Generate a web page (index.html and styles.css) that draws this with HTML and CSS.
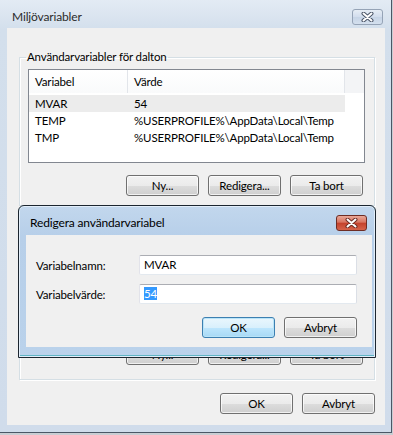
FILE: index.html
```html
<!DOCTYPE html>
<html lang="sv">
<head>
    <meta charset="UTF-8">
    <title>Miljövariabler</title>
    <link rel="stylesheet" href="styles.css">
</head>
<body>

    <div class="window">
        <div class="titlebar">
            <span class="title">Miljövariabler</span>
            <span class="close-btn">
                <svg width="13" height="10" viewBox="0 0 13 10">
                    <path d="M2.5 1.5 L10.5 8.5 M10.5 1.5 L2.5 8.5" stroke="#4a5568" stroke-width="4" stroke-linecap="round"/>
                    <path d="M2.5 1.5 L10.5 8.5 M10.5 1.5 L2.5 8.5" stroke="#fff" stroke-width="2" stroke-linecap="round"/>
                </svg>
            </span>
        </div>

        <div class="client">
            <fieldset class="group">
                <legend>Användarvariabler för dalton</legend>
                <div class="listview">
                    <div class="lv-header">
                        <span class="col-name">Variabel</span>
                        <span class="col-value">Värde</span>
                        <span class="col-fill"></span>
                    </div>
                    <div class="lv-row selected">
                        <span class="col-name">MVAR</span>
                        <span class="col-value">54</span>
                    </div>
                    <div class="lv-row">
                        <span class="col-name">TEMP</span>
                        <span class="col-value">%USERPROFILE%\AppData\Local\Temp</span>
                    </div>
                    <div class="lv-row">
                        <span class="col-name">TMP</span>
                        <span class="col-value">%USERPROFILE%\AppData\Local\Temp</span>
                    </div>
                </div>
                <div class="button-row">
                    <button class="btn">Ny...</button>
                    <button class="btn">Redigera...</button>
                    <button class="btn">Ta bort</button>
                </div>
            </fieldset>

            <!-- system variables group, mostly hidden by the edit dialog -->
            <fieldset class="group system-group">
                <div class="listview system-list"></div>
                <div class="button-row">
                    <button class="btn">Ny...</button>
                    <button class="btn">Redigera...</button>
                    <button class="btn">Ta bort</button>
                </div>
            </fieldset>

            <div class="dialog-buttons">
                <button class="btn">OK</button>
                <button class="btn">Avbryt</button>
            </div>
        </div>

        <!-- edit dialog on top of the main window -->
        <div class="edit-dialog">
            <div class="titlebar edit-titlebar">
                <span class="title">Redigera användarvariabel</span>
                <span class="close-btn red">
                    <svg width="13" height="10" viewBox="0 0 13 10">
                        <path d="M2.5 1.5 L10.5 8.5 M10.5 1.5 L2.5 8.5" stroke="#6b2a22" stroke-width="4" stroke-linecap="round"/>
                        <path d="M2.5 1.5 L10.5 8.5 M10.5 1.5 L2.5 8.5" stroke="#fff" stroke-width="2" stroke-linecap="round"/>
                    </svg>
                </span>
            </div>
            <div class="edit-client">
                <div class="form-grid">
                    <label>Variabelnamn:</label>
                    <div class="textbox">MVAR</div>
                    <label>Variabelvärde:</label>
                    <div class="textbox"><span class="sel">54</span></div>
                </div>
                <div class="dialog-buttons edit-buttons">
                    <button class="btn focused">OK</button>
                    <button class="btn">Avbryt</button>
                </div>
            </div>
        </div>
    </div>

</body>
</html>
```

FILE: styles.css
```css
body {
    margin: 0;
    width: 393px;
    height: 435px;
    overflow: hidden;
    background: #c9cdd3;
    font-family: Lato, "Noto Sans", sans-serif;
    font-size: 11.5px;
    letter-spacing: -0.15px;
    color: #000;
}

.window {
    position: relative;
    width: 392px;
    height: 433px;
    box-sizing: border-box;
    border-right: 1px solid #4b5766;
    border-bottom: 1px solid #4b5766;
    background: linear-gradient(to bottom, #e3ebf4, #d3dfec 30px, #d0dceb);
    display: flex;
    flex-direction: column;
}

.titlebar {
    height: 28px;
    box-sizing: border-box;
    display: flex;
    justify-content: space-between;
    align-items: flex-start;
    padding: 9px 8px 0 12px;
}

.title {
    font-size: 12px;
    line-height: 16px;
    color: #2b2b2b;
}

.close-btn {
    width: 31px;
    height: 16px;
    box-sizing: border-box;
    border: 1px solid #95a3b6;
    border-radius: 3px;
    background: linear-gradient(to bottom, #e6edf5, #d2dded 50%, #c6d4e6 51%, #d4e0ee);
    display: flex;
    align-items: center;
    justify-content: center;
}

.close-btn.red {
    border-color: #6e2d24;
    background: linear-gradient(to bottom, #e9a898, #d8735f 45%, #c4412b 50%, #d5634a);
}

.client {
    flex: 1;
    margin: 0 6px 7px 7px;
    padding: 21px 10px 0 12px;
    background: #f0f0f0;
}

.group {
    margin: 0;
    padding: 4px 9px 9px 8px;
    border: 1px solid #d5dfe5;
    box-shadow: inset 1px 1px 0 #fff, 1px 1px 0 #fff;
}

.system-group {
    margin-top: 7px;
    padding-bottom: 14px;
}

.group legend {
    margin-left: -2px;
    padding: 0 1px;
    line-height: 16px;
}

.listview {
    height: 94px;
    box-sizing: border-box;
    border: 1px solid #828790;
    background: white;
}

.system-list {
    height: 114px;
}

.lv-header {
    display: flex;
    height: 23px;
    align-items: stretch;
    background: linear-gradient(to bottom, #ffffff, #f9fafb);
}

.lv-header span {
    display: flex;
    align-items: center;
    border-right: 1px solid #e2e5ea;
}

.lv-header .col-fill {
    flex: 1;
    border-right: none;
    background: #f3f4f6;
}

.col-name {
    width: 99px;
    padding-left: 6px;
    box-sizing: border-box;
    flex-shrink: 0;
}

.col-value {
    width: 217px;
    padding-left: 6px;
    box-sizing: border-box;
    flex-shrink: 0;
}

.lv-row {
    display: flex;
    height: 17px;
    line-height: 17px;
    width: 316px;
}

.lv-header + .lv-row {
    margin-top: 2px;
}

.lv-row.selected {
    background: #ececec;
}

.button-row {
    display: flex;
    justify-content: flex-end;
    gap: 9px;
    margin: 12px 2px 0 0;
}

.btn {
    width: 73px;
    height: 21px;
    padding: 0;
    margin: 0;
    font-family: inherit;
    font-size: 11.5px;
    letter-spacing: inherit;
    color: #000;
    border: 1px solid #707070;
    border-radius: 3px;
    background: linear-gradient(to bottom, #f2f2f2, #ebebeb 50%, #dddddd 51%, #cfcfcf);
    box-shadow: inset 0 0 0 1px rgba(255, 255, 255, 0.7);
}

.btn.focused {
    border-color: #3c7fb1;
    background: linear-gradient(to bottom, #eaf6fd, #d9f0fc 50%, #bee6fd 51%, #a7d9f5);
    box-shadow: inset 0 0 0 1px #b9e4f8;
}

.dialog-buttons {
    display: flex;
    justify-content: flex-end;
    gap: 9px;
    margin-top: 13px;
}

.edit-dialog {
    position: absolute;
    left: 18px;
    top: 205px;
    width: 358px;
    height: 153px;
    box-sizing: border-box;
    border: 1px solid #1c2630;
    border-radius: 6px 6px 0 0;
    background: linear-gradient(to bottom, #c2d7ed, #b7cfe9 30px, #bad2eb);
    box-shadow: inset 0 0 0 1px #e2eefa, inset 0 -1px 0 1px #5fb4c4;
    display: flex;
    flex-direction: column;
}

.edit-titlebar {
    height: 29px;
    padding: 9px 8px 0 11px;
}

.edit-titlebar .title {
    color: #000;
}

.edit-client {
    flex: 1;
    margin: 0 3px 10px 7px;
    padding: 20px 15px 0 10px;
    background: #f0f0f0;
}

.form-grid {
    display: grid;
    grid-template-columns: 103px 1fr;
    row-gap: 9px;
    align-items: center;
}

.textbox {
    height: 20px;
    box-sizing: border-box;
    border: 1px solid #abadb3;
    border-color: #abadb3 #dbdfe6 #e3e9ef #e2e3ea;
    border-radius: 2px;
    background: white;
    padding-left: 4px;
    line-height: 18px;
}

.sel {
    background: #3399ff;
    color: white;
}

.edit-buttons {
    margin-top: 13px;
}
```
